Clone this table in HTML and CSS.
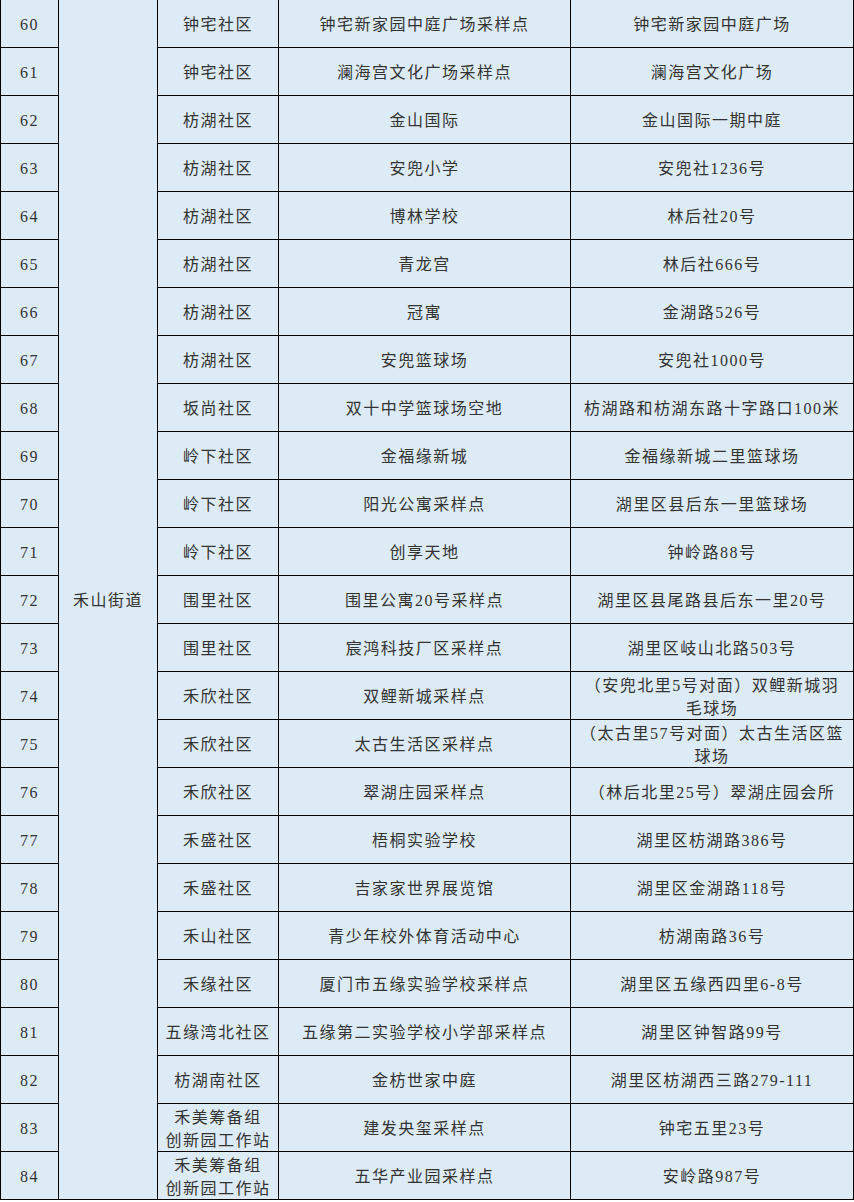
FILE: index.html
```html
<!DOCTYPE html>
<html lang="zh-CN">
<head>
<meta charset="utf-8">
<title>核酸采样点</title>
<link rel="stylesheet" href="styles.css">
</head>
<body>
<div class="sheet">
  <div class="cell street">禾山街道</div>

  <div class="cell">60</div><div class="cell">钟宅社区</div><div class="cell">钟宅新家园中庭广场采样点</div><div class="cell">钟宅新家园中庭广场</div>
  <div class="cell">61</div><div class="cell">钟宅社区</div><div class="cell">澜海宫文化广场采样点</div><div class="cell">澜海宫文化广场</div>
  <div class="cell">62</div><div class="cell">枋湖社区</div><div class="cell">金山国际</div><div class="cell">金山国际一期中庭</div>
  <div class="cell">63</div><div class="cell">枋湖社区</div><div class="cell">安兜小学</div><div class="cell">安兜社1236号</div>
  <div class="cell">64</div><div class="cell">枋湖社区</div><div class="cell">博林学校</div><div class="cell">林后社20号</div>
  <div class="cell">65</div><div class="cell">枋湖社区</div><div class="cell">青龙宫</div><div class="cell">林后社666号</div>
  <div class="cell">66</div><div class="cell">枋湖社区</div><div class="cell">冠寓</div><div class="cell">金湖路526号</div>
  <div class="cell">67</div><div class="cell">枋湖社区</div><div class="cell">安兜篮球场</div><div class="cell">安兜社1000号</div>
  <div class="cell">68</div><div class="cell">坂尚社区</div><div class="cell">双十中学篮球场空地</div><div class="cell">枋湖路和枋湖东路十字路口100米</div>
  <div class="cell">69</div><div class="cell">岭下社区</div><div class="cell">金福缘新城</div><div class="cell">金福缘新城二里篮球场</div>
  <div class="cell">70</div><div class="cell">岭下社区</div><div class="cell">阳光公寓采样点</div><div class="cell">湖里区县后东一里篮球场</div>
  <div class="cell">71</div><div class="cell">岭下社区</div><div class="cell">创享天地</div><div class="cell">钟岭路88号</div>
  <div class="cell">72</div><div class="cell">围里社区</div><div class="cell">围里公寓20号采样点</div><div class="cell">湖里区县尾路县后东一里20号</div>
  <div class="cell">73</div><div class="cell">围里社区</div><div class="cell">宸鸿科技厂区采样点</div><div class="cell">湖里区岐山北路503号</div>
  <div class="cell">74</div><div class="cell">禾欣社区</div><div class="cell">双鲤新城采样点</div><div class="cell">（安兜北里5号对面）双鲤新城羽<br>毛球场</div>
  <div class="cell">75</div><div class="cell">禾欣社区</div><div class="cell">太古生活区采样点</div><div class="cell">（太古里57号对面）太古生活区篮<br>球场</div>
  <div class="cell">76</div><div class="cell">禾欣社区</div><div class="cell">翠湖庄园采样点</div><div class="cell">（林后北里25号）翠湖庄园会所</div>
  <div class="cell">77</div><div class="cell">禾盛社区</div><div class="cell">梧桐实验学校</div><div class="cell">湖里区枋湖路386号</div>
  <div class="cell">78</div><div class="cell">禾盛社区</div><div class="cell">吉家家世界展览馆</div><div class="cell">湖里区金湖路118号</div>
  <div class="cell">79</div><div class="cell">禾山社区</div><div class="cell">青少年校外体育活动中心</div><div class="cell">枋湖南路36号</div>
  <div class="cell">80</div><div class="cell">禾缘社区</div><div class="cell">厦门市五缘实验学校采样点</div><div class="cell">湖里区五缘西四里6-8号</div>
  <div class="cell">81</div><div class="cell">五缘湾北社区</div><div class="cell">五缘第二实验学校小学部采样点</div><div class="cell">湖里区钟智路99号</div>
  <div class="cell">82</div><div class="cell">枋湖南社区</div><div class="cell">金枋世家中庭</div><div class="cell">湖里区枋湖西三路279-111</div>
  <div class="cell">83</div><div class="cell">禾美筹备组<br>创新园工作站</div><div class="cell">建发央玺采样点</div><div class="cell">钟宅五里23号</div>
  <div class="cell">84</div><div class="cell">禾美筹备组<br>创新园工作站</div><div class="cell">五华产业园采样点</div><div class="cell">安岭路987号</div>
</div>
</body>
</html>
```

FILE: styles.css
```css
html, body {
  margin: 0;
  padding: 0;
  background: #ffffff;
}

.sheet {
  width: 852px;
  display: grid;
  grid-template-columns: 57px 98px 120px 291px 282px;
  grid-template-rows: repeat(25, 47px);
  gap: 1px;
  padding: 0 1px 1px 1px;
  background: #000000;
  font-family: "Liberation Serif", "Noto Sans CJK SC", serif;
  font-size: 16px;
  letter-spacing: 1.5px;
  color: #333333;
}

.cell {
  background: #ddebf7;
  display: flex;
  align-items: center;
  justify-content: center;
  text-align: center;
  line-height: 23px;
  padding-top: 2px;
  white-space: nowrap;
  overflow: visible;
}

.street {
  grid-column: 2;
  grid-row: 1 / -1;
}
```
